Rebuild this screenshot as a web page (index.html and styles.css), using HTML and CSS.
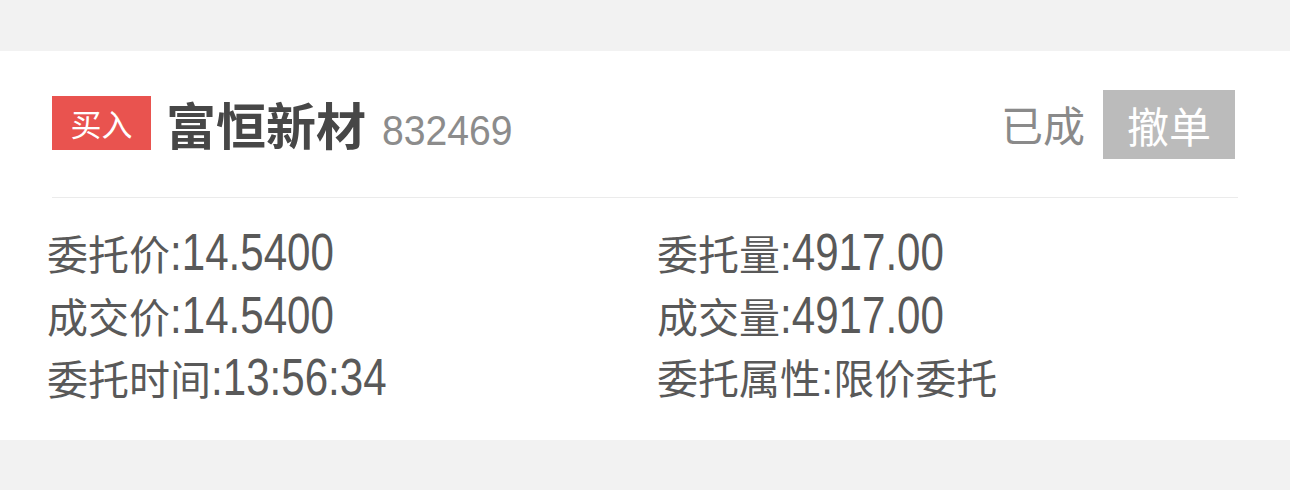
FILE: index.html
```html
<!DOCTYPE html>
<html lang="zh-CN">
<head>
<meta charset="utf-8">
<title>委托详情</title>
<link rel="stylesheet" href="styles.css">
</head>
<body>
<section class="card">
  <header class="head">
    <div class="title">
      <span class="badge">买入</span>
      <span class="name">富恒新材</span>
      <span class="code">832469</span>
    </div>
    <div class="actions">
      <span class="status">已成</span>
      <button class="cancel" type="button">撤单</button>
    </div>
  </header>
  <div class="divider"></div>
  <div class="details">
    <div class="item">委托价<span class="num">:14.5400</span></div>
    <div class="item">委托量<span class="num">:4917.00</span></div>
    <div class="item">成交价<span class="num">:14.5400</span></div>
    <div class="item">成交量<span class="num">:4917.00</span></div>
    <div class="item">委托时间<span class="num">:13:56:34</span></div>
    <div class="item">委托属性<span class="colon">:</span>限价委托</div>
  </div>
</section>
</body>
</html>
```

FILE: styles.css
```css
html, body {
  margin: 0;
  padding: 0;
}
body {
  background: #f2f2f2;
  font-family: "Noto Sans CJK SC", "Liberation Sans", sans-serif;
  width: 1290px;
  height: 490px;
  overflow: hidden;
}
.card {
  margin-top: 51px;
  height: 389px;
  background: #ffffff;
  box-sizing: border-box;
}
.head {
  height: 146px;
  box-sizing: border-box;
  padding: 0 55px 0 52px;
  display: flex;
  align-items: center;
  justify-content: space-between;
}
.title {
  display: flex;
  align-items: center;
}
.badge {
  display: block;
  height: 54px;
  line-height: 54px;
  width: 99px;
  text-align: center;
  background: #e9534f;
  color: #ffffff;
  font-size: 31px;
  margin-bottom: 2px;
}
.name {
  margin-left: 15px;
  margin-bottom: 3px;
  font-size: 50px;
  font-weight: 700;
  color: #474747;
  line-height: 1;
}
.code {
  display: inline-block;
  margin-left: 16px;
  margin-top: 12px;
  font-family: "Liberation Sans", Arial, sans-serif;
  font-size: 43px;
  color: #8c8c8c;
  line-height: 1;
  transform: scaleX(0.91);
  transform-origin: left center;
}
.actions {
  display: flex;
  align-items: center;
}
.status {
  font-size: 42px;
  color: #8a8a8a;
  line-height: 1;
}
.cancel {
  margin-left: 18px;
  width: 132px;
  height: 69px;
  border: 0;
  padding: 0;
  background: #bbbbbb;
  color: #ffffff;
  font-family: "Noto Sans CJK SC", sans-serif;
  font-size: 42px;
  line-height: 69px;
}
.divider {
  margin: 0 52px;
  height: 1px;
  background: #ebebeb;
}
.details {
  padding: 23px 0 0 47px;
  display: grid;
  grid-template-columns: 610px 1fr;
  grid-auto-rows: 62.5px;
  align-items: center;
  font-size: 41px;
  color: #595959;
}
.item {
  white-space: nowrap;
  line-height: 62px;
}
.num {
  display: inline-block;
  font-family: "Liberation Sans", Arial, sans-serif;
  font-size: 52px;
  line-height: 0;
  transform: scaleX(0.81);
  transform-origin: left center;
}
.colon {
  font-family: "Liberation Sans", Arial, sans-serif;
  font-size: 44px;
}
```
